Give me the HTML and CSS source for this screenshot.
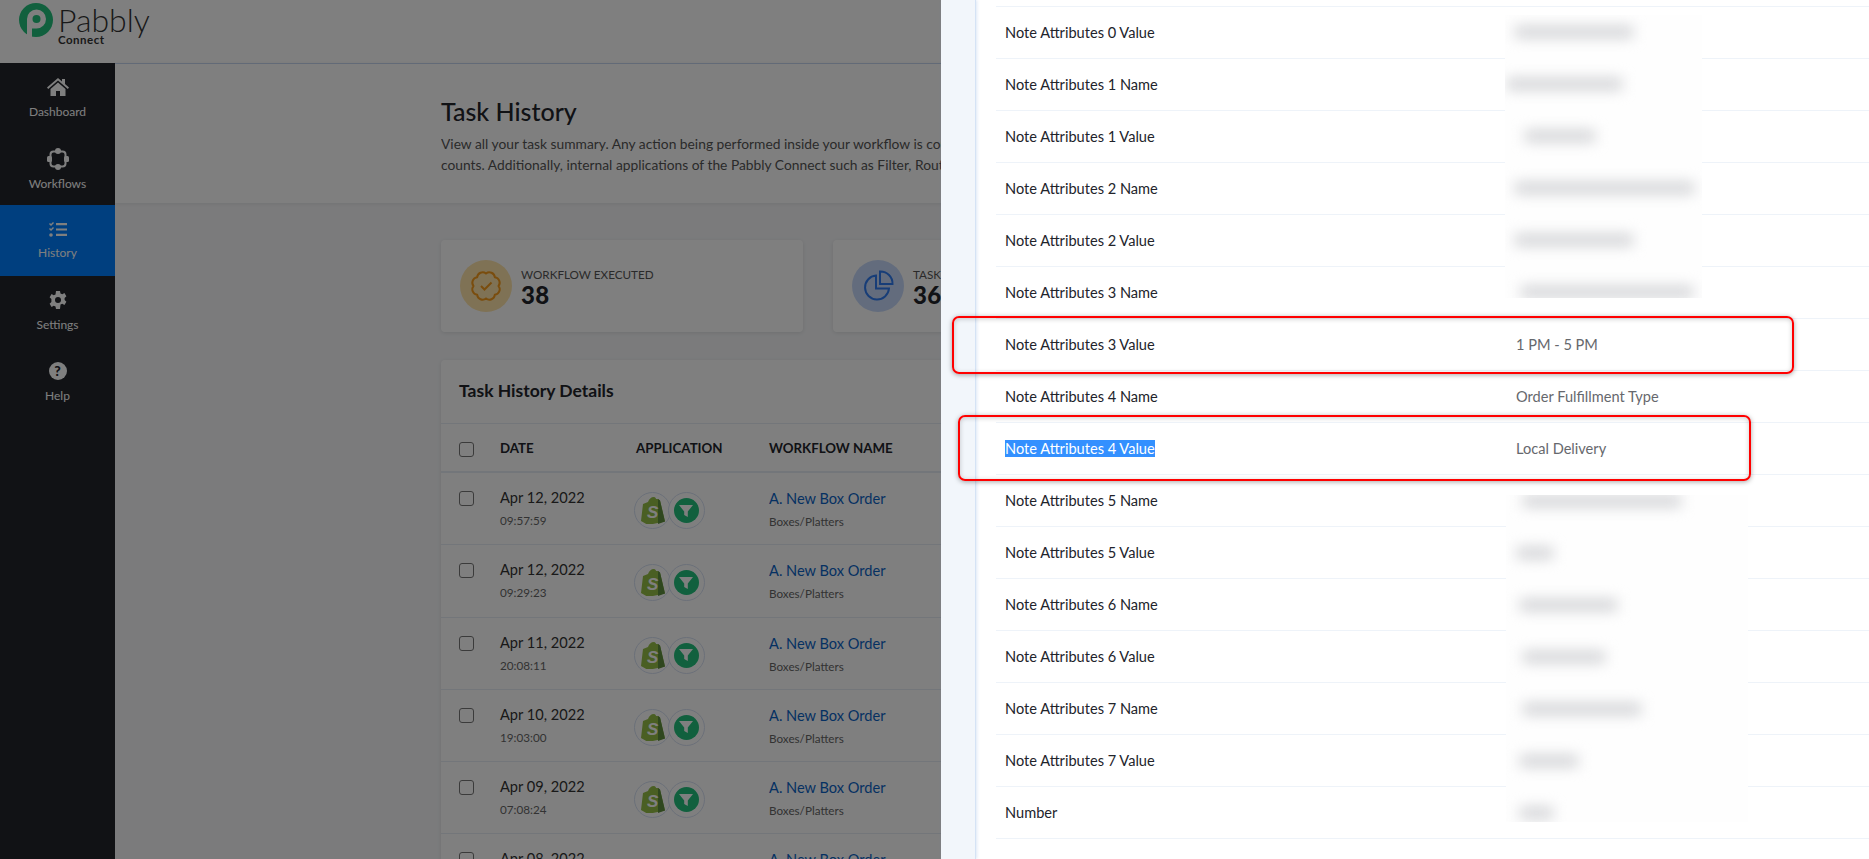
FILE: index.html
```html
<!DOCTYPE html>
<html lang="en">
<head>
    <meta charset="UTF-8">
    <title>Task History - Pabbly Connect</title>
    <link rel="stylesheet" href="styles.css">
</head>
<body>

    <header class="topbar">
        <svg class="logo-mark" width="36" height="36" viewBox="0 0 36 36">
            <circle cx="18" cy="18" r="17" fill="#23c17c"/>
            <path d="M9 36V17a9.5 9.5 0 1 1 9.5 9.500H14V36z" fill="#fff"/>
            <circle cx="18.500" cy="17" r="4" fill="#23c17c"/>
        </svg>
        <div class="logo-text">
            <span class="logo-name">Pabbly</span>
            <span class="logo-sub">Connect</span>
        </div>
    </header>

    <div class="layout">
        <nav class="sidebar">
            <a class="nav-item">
                <svg width="22" height="18" viewBox="0 0 22 18"><path d="M11 0l4 3.400V1h3v5l4 3.600-1.200 1.300L11 2.600 1.200 10.900 0 9.600zM3.500 11L11 4.600 18.500 11v7H13v-5H9v5H3.500z" fill="#fff"/></svg>
                <span>Dashboard</span>
            </a>
            <a class="nav-item tight">
                <svg width="22" height="22" viewBox="0 0 22 22"><rect x="3.500" y="3.500" width="15" height="15" rx="3" fill="none" stroke="#fff" stroke-width="2"/><circle cx="11" cy="3" r="3" fill="#fff"/><circle cx="11" cy="19" r="3" fill="#fff"/><rect x="0" y="8" width="5" height="6" rx="1.500" fill="#fff"/><rect x="17" y="8" width="5" height="6" rx="1.500" fill="#fff"/></svg>
                <span>Workflows</span>
            </a>
            <a class="nav-item active">
                <svg width="18" height="15" viewBox="0 0 18 15"><path d="M0 2l1 -1 1 1 2 -2 1 1 -3 3zM0 7l1 -1 1 1 2 -2 1 1 -3 3z" fill="#fff"/><circle cx="2" cy="13" r="1.800" fill="#fff"/><path d="M7 1h11v2.200H7zM7 6.400h11v2.200H7zM7 11.800h11v2.200H7z" fill="#fff"/></svg>
                <span>History</span>
            </a>
            <a class="nav-item">
                <svg width="18" height="18" viewBox="0 0 18 18"><path d="M7 0h4l.5 2.400 1.800.8 2.100-1.300 2 3.400-1.800 1.600v2.200l1.800 1.600-2 3.400-2.100-1.300-1.800.8L11 18H7l-.5-2.400-1.800-.8-2.100 1.300-2-3.400 1.800-1.600V7.900L.6 6.300l2-3.400 2.100 1.300 1.800-.8z" fill="#fff"/><circle cx="9" cy="9" r="3" fill="#22242b"/></svg>
                <span>Settings</span>
            </a>
            <a class="nav-item">
                <span class="help-icon">?</span>
                <span>Help</span>
            </a>
        </nav>

        <main class="content">
            <section class="page-head">
                <h1>Task History</h1>
                <p>View all your task summary. Any action being performed inside your workflow is counted as a task.<br>counts. Additionally, internal applications of the Pabbly Connect such as Filter, Router are not counted.</p>
            </section>

            <section class="page-body">
                <div class="stats">
                    <div class="stat-card">
                        <div class="stat-icon orange">
                            <svg width="32" height="32" viewBox="-16 -16 32 32"><path d="M12.500 0A5.500 5.500 0 0 1 8.840 8.840A5.500 5.500 0 0 1 0 12.500A5.500 5.500 0 0 1 -8.840 8.840A5.500 5.500 0 0 1 -12.500 0A5.500 5.500 0 0 1 -8.840 -8.840A5.500 5.500 0 0 1 0 -12.500A5.500 5.500 0 0 1 8.840 -8.840A5.500 5.500 0 0 1 12.500 0z" fill="none" stroke="#f59a1b" stroke-width="2"/><path d="M-5 0l3.500 3.500L5.500 -3.500" fill="none" stroke="#f59a1b" stroke-width="2"/></svg>
                        </div>
                        <div>
                            <div class="stat-label">WORKFLOW EXECUTED</div>
                            <div class="stat-value">38</div>
                        </div>
                    </div>
                    <div class="stat-card">
                        <div class="stat-icon blue">
                            <svg width="32" height="32" viewBox="0 0 32 32"><path d="M14 5.500A12 12 0 1 0 27 18.500H14z" fill="none" stroke="#2f7bf0" stroke-width="2"/><path d="M18 1.500A12 12 0 0 1 30.500 14H18z" fill="none" stroke="#2f7bf0" stroke-width="2"/></svg>
                        </div>
                        <div>
                            <div class="stat-label">TASKS CONSUMED</div>
                            <div class="stat-value">36</div>
                        </div>
                    </div>
                </div>

                <div class="table-card">
                    <h2>Task History Details</h2>
                    <div class="t-row t-head">
                        <span class="check"></span>
                        <span class="col-date">DATE</span>
                        <span class="col-app">APPLICATION</span>
                        <span class="col-name">WORKFLOW NAME</span>
                    </div>
                    <div class="t-row">
                        <span class="check"></span>
                        <div class="col-date"><div class="main-text">Apr 12, 2022</div><div class="sub-text">09:57:59</div></div>
                        <div class="col-app">
                            <span class="app-icon"><svg width="24" height="27" viewBox="0 0 24 27"><path d="M2 7l5-2C8 2 10 0 13 0c1 0 2 1 2 2l2 0 2 1.500 5 21-17 3.500L0 24z" fill="#95bf47"/><path d="M17 2l2 1.500 5 21-7 2.500z" fill="#5e8e3e"/><text x="6" y="21" class="bag-s">S</text></svg></span>
                            <span class="app-icon"><span class="filter-dot"><svg width="14" height="14" viewBox="0 0 14 14"><path d="M0 1h14L8.800 7.500V13L5.200 11V7.500z" fill="#fff"/></svg></span></span>
                        </div>
                        <div class="col-name"><a class="flow-link">A. New Box Order</a><div class="sub-text">Boxes/Platters</div></div>
                    </div>
                    <div class="t-row">
                        <span class="check"></span>
                        <div class="col-date"><div class="main-text">Apr 12, 2022</div><div class="sub-text">09:29:23</div></div>
                        <div class="col-app">
                            <span class="app-icon"><svg width="24" height="27" viewBox="0 0 24 27"><path d="M2 7l5-2C8 2 10 0 13 0c1 0 2 1 2 2l2 0 2 1.500 5 21-17 3.500L0 24z" fill="#95bf47"/><path d="M17 2l2 1.500 5 21-7 2.500z" fill="#5e8e3e"/><text x="6" y="21" class="bag-s">S</text></svg></span>
                            <span class="app-icon"><span class="filter-dot"><svg width="14" height="14" viewBox="0 0 14 14"><path d="M0 1h14L8.800 7.500V13L5.200 11V7.500z" fill="#fff"/></svg></span></span>
                        </div>
                        <div class="col-name"><a class="flow-link">A. New Box Order</a><div class="sub-text">Boxes/Platters</div></div>
                    </div>
                    <div class="t-row">
                        <span class="check"></span>
                        <div class="col-date"><div class="main-text">Apr 11, 2022</div><div class="sub-text">20:08:11</div></div>
                        <div class="col-app">
                            <span class="app-icon"><svg width="24" height="27" viewBox="0 0 24 27"><path d="M2 7l5-2C8 2 10 0 13 0c1 0 2 1 2 2l2 0 2 1.500 5 21-17 3.500L0 24z" fill="#95bf47"/><path d="M17 2l2 1.500 5 21-7 2.500z" fill="#5e8e3e"/><text x="6" y="21" class="bag-s">S</text></svg></span>
                            <span class="app-icon"><span class="filter-dot"><svg width="14" height="14" viewBox="0 0 14 14"><path d="M0 1h14L8.800 7.500V13L5.200 11V7.500z" fill="#fff"/></svg></span></span>
                        </div>
                        <div class="col-name"><a class="flow-link">A. New Box Order</a><div class="sub-text">Boxes/Platters</div></div>
                    </div>
                    <div class="t-row">
                        <span class="check"></span>
                        <div class="col-date"><div class="main-text">Apr 10, 2022</div><div class="sub-text">19:03:00</div></div>
                        <div class="col-app">
                            <span class="app-icon"><svg width="24" height="27" viewBox="0 0 24 27"><path d="M2 7l5-2C8 2 10 0 13 0c1 0 2 1 2 2l2 0 2 1.500 5 21-17 3.500L0 24z" fill="#95bf47"/><path d="M17 2l2 1.500 5 21-7 2.500z" fill="#5e8e3e"/><text x="6" y="21" class="bag-s">S</text></svg></span>
                            <span class="app-icon"><span class="filter-dot"><svg width="14" height="14" viewBox="0 0 14 14"><path d="M0 1h14L8.800 7.500V13L5.200 11V7.500z" fill="#fff"/></svg></span></span>
                        </div>
                        <div class="col-name"><a class="flow-link">A. New Box Order</a><div class="sub-text">Boxes/Platters</div></div>
                    </div>
                    <div class="t-row">
                        <span class="check"></span>
                        <div class="col-date"><div class="main-text">Apr 09, 2022</div><div class="sub-text">07:08:24</div></div>
                        <div class="col-app">
                            <span class="app-icon"><svg width="24" height="27" viewBox="0 0 24 27"><path d="M2 7l5-2C8 2 10 0 13 0c1 0 2 1 2 2l2 0 2 1.500 5 21-17 3.500L0 24z" fill="#95bf47"/><path d="M17 2l2 1.500 5 21-7 2.500z" fill="#5e8e3e"/><text x="6" y="21" class="bag-s">S</text></svg></span>
                            <span class="app-icon"><span class="filter-dot"><svg width="14" height="14" viewBox="0 0 14 14"><path d="M0 1h14L8.800 7.500V13L5.200 11V7.500z" fill="#fff"/></svg></span></span>
                        </div>
                        <div class="col-name"><a class="flow-link">A. New Box Order</a><div class="sub-text">Boxes/Platters</div></div>
                    </div>
                    <div class="t-row">
                        <span class="check"></span>
                        <div class="col-date"><div class="main-text">Apr 08, 2022</div></div>
                        <div class="col-app"></div>
                        <div class="col-name"><a class="flow-link">A. New Box Order</a></div>
                    </div>
                </div>
            </section>
        </main>
    </div>

    <div class="backdrop"></div>

    <aside class="drawer">
        <div class="drawer-strip"></div>
        <div class="drawer-body">
            <div class="d-top"></div>
            <div class="d-row"><span class="d-key">Note Attributes 0 Value</span></div>
            <div class="d-row"><span class="d-key">Note Attributes 1 Name</span></div>
            <div class="d-row"><span class="d-key">Note Attributes 1 Value</span></div>
            <div class="d-row"><span class="d-key">Note Attributes 2 Name</span></div>
            <div class="d-row"><span class="d-key">Note Attributes 2 Value</span></div>
            <div class="d-row"><span class="d-key">Note Attributes 3 Name</span></div>
            <div class="d-row"><span class="d-key">Note Attributes 3 Value</span><span class="d-val">1 PM - 5 PM</span></div>
            <div class="d-row"><span class="d-key">Note Attributes 4 Name</span><span class="d-val">Order Fulfillment Type</span></div>
            <div class="d-row"><span class="d-key"><span class="picked">Note Attributes 4 Value</span></span><span class="d-val">Local Delivery</span></div>
            <div class="d-row"><span class="d-key">Note Attributes 5 Name</span></div>
            <div class="d-row"><span class="d-key">Note Attributes 5 Value</span></div>
            <div class="d-row"><span class="d-key">Note Attributes 6 Name</span></div>
            <div class="d-row"><span class="d-key">Note Attributes 6 Value</span></div>
            <div class="d-row"><span class="d-key">Note Attributes 7 Name</span></div>
            <div class="d-row"><span class="d-key">Note Attributes 7 Value</span></div>
            <div class="d-row"><span class="d-key">Number</span></div>
        </div>
    </aside>

    <!-- blurred-out values and the red marks drawn on top of the screenshot -->
    <div class="smudge smudge-top">
        <div class="smear"><i style="width:118px;margin-left:10px"></i></div>
        <div class="smear"><i style="width:115px;margin-left:2px"></i></div>
        <div class="smear"><i style="width:70px;margin-left:20px"></i></div>
        <div class="smear"><i style="width:179px;margin-left:10px"></i></div>
        <div class="smear"><i style="width:118px;margin-left:10px"></i></div>
        <div class="smear"><i style="width:172px;margin-left:16px"></i></div>
    </div>
    <div class="smudge smudge-low">
        <div class="smear"><i style="width:158px;margin-left:17px"></i></div>
        <div class="smear"><i style="width:36px;margin-left:11px"></i></div>
        <div class="smear"><i style="width:97px;margin-left:14px"></i></div>
        <div class="smear"><i style="width:82px;margin-left:17px"></i></div>
        <div class="smear"><i style="width:118px;margin-left:17px"></i></div>
        <div class="smear"><i style="width:58px;margin-left:14px"></i></div>
        <div class="smear"><i style="width:33px;margin-left:14px"></i></div>
    </div>

    <div class="mark mark-one"></div>
    <div class="mark mark-two"></div>

</body>
</html>
```

FILE: styles.css
```css
html, body {
    margin: 0;
    padding: 0;
    height: 859px;
    overflow: hidden;
}

body {
    position: relative;
    font-family: 'Lato', 'Open Sans', sans-serif;
    color: #22242b;
    background-color: #f6f7f9;
}

/* --- Top bar --- */
.topbar {
    height: 63px;
    box-sizing: border-box;
    padding: 2px 0 0 18px;
    display: flex;
    gap: 4px;
    background-color: #fff;
}

.logo-text {
    display: flex;
    flex-direction: column;
    padding-top: 3px;
}

.logo-name {
    font-size: 32px;
    font-weight: 300;
    line-height: 30px;
    color: #333;
}

.logo-sub {
    font-size: 11.500px;
    font-weight: 700;
    line-height: 9px;
    letter-spacing: 0.5px;
    color: #333;
}

/* --- Sidebar --- */
.layout {
    display: flex;
    height: 796px;
}

.sidebar {
    width: 115px;
    flex-shrink: 0;
    background-color: #22242b;
}

.nav-item {
    height: 71px;
    display: flex;
    flex-direction: column;
    align-items: center;
    justify-content: center;
    gap: 8px;
    color: #fff;
    font-size: 12px;
}

.nav-item.tight {
    gap: 6px;
}

.nav-item.active {
    background-color: #007eff;
}

.help-icon {
    width: 18px;
    height: 18px;
    border-radius: 50%;
    background-color: #fff;
    color: #22242b;
    font-size: 14px;
    font-weight: 900;
    line-height: 18px;
    text-align: center;
}

/* --- Main content --- */
.content {
    flex: 1;
    min-width: 0;
}

.page-head {
    height: 140px;
    box-sizing: border-box;
    padding: 31px 0 0 326px;
    background-color: #fff;
    border-top: 1px solid #c4d4ee;
    box-shadow: 0 1px 4px rgba(0, 0, 0, 0.08);
}

.page-head h1 {
    margin: 0 0 6px;
    font-size: 25px;
    font-weight: 500;
    line-height: 32px;
}

.page-head p {
    width: 500px;
    margin: 0;
    overflow: hidden;
    font-size: 13.800px;
    line-height: 21px;
    color: #555;
    white-space: nowrap;
}

.page-body {
    padding: 37px 0 0 326px;
}

.stats {
    display: flex;
    gap: 30px;
}

.stat-card {
    width: 362px;
    height: 92px;
    box-sizing: border-box;
    padding: 20px 19px;
    display: flex;
    align-items: center;
    gap: 9px;
    background-color: #fff;
    border-radius: 4px;
    box-shadow: 0 1px 4px rgba(0, 0, 0, 0.1);
}

.stat-icon {
    width: 52px;
    height: 52px;
    border-radius: 50%;
    display: flex;
    align-items: center;
    justify-content: center;
}

.stat-icon.orange {
    background-color: #ffe4ab;
}

.stat-icon.blue {
    background-color: #c7d9fa;
}

.stat-label {
    font-size: 11.700px;
    line-height: 16px;
    color: #555;
}

.stat-value {
    font-size: 24px;
    font-weight: 900;
    line-height: 25px;
    letter-spacing: 0.3px;
}

/* --- History table --- */
.table-card {
    width: 1000px;
    margin-top: 28px;
    background-color: #fff;
    border-radius: 4px;
    box-shadow: 0 1px 4px rgba(0, 0, 0, 0.1);
}

.table-card h2 {
    margin: 0;
    height: 64px;
    padding-left: 18px;
    font-size: 17.500px;
    font-weight: 700;
    line-height: 62px;
    border-bottom: 1px solid #e6ecf5;
    box-sizing: border-box;
}

.t-row {
    height: 72.300px;
    box-sizing: border-box;
    padding-left: 18px;
    display: flex;
    border-bottom: 1px solid #e6ecf5;
}

.t-head {
    height: 49px;
    align-items: center;
    font-size: 13.300px;
    font-weight: 700;
    border-bottom-width: 2px;
}

.check {
    width: 15px;
    height: 15px;
    box-sizing: border-box;
    margin-top: 18px;
    border: 1px solid #777;
    border-radius: 3px;
    background-color: #fff;
}

.t-head .check {
    margin-top: 4px;
}

.col-date {
    width: 136px;
    margin-left: 26px;
}

.col-app {
    width: 135px;
    display: flex;
    align-items: flex-start;
    margin-left: -2px;
}

.t-head .col-app {
    width: 133px;
    margin-left: 0;
}

.col-name {
    flex: 1;
}

.t-row > div {
    padding-top: 15px;
}

.main-text, .flow-link {
    font-size: 14.600px;
    line-height: 20px;
}

.main-text {
    color: #333;
}

.flow-link {
    color: #0b63c5;
}

.sub-text {
    margin-top: 5px;
    font-size: 11.700px;
    line-height: 14px;
    color: #666;
}

.app-icon {
    width: 37px;
    height: 37px;
    box-sizing: border-box;
    margin: 4px -3.500px 0 0;
    display: flex;
    align-items: center;
    justify-content: center;
    border: 1px solid #d6e0f2;
    border-radius: 50%;
    background-color: #fff;
}

.filter-dot {
    width: 25px;
    height: 25px;
    border-radius: 50%;
    display: flex;
    align-items: center;
    justify-content: center;
    background-color: #23c17c;
}

.bag-s {
    font-family: 'Liberation Sans', sans-serif;
    font-size: 17px;
    font-weight: 700;
    font-style: italic;
    fill: #fff;
}

/* --- Dimmed backdrop --- */
.backdrop {
    position: absolute;
    top: 0;
    left: 0;
    width: 100%;
    height: 100%;
    background-color: rgba(0, 0, 0, 0.5);
}

/* --- Drawer --- */
.drawer {
    position: absolute;
    top: 0;
    right: 0;
    bottom: 0;
    width: 928px;
    display: flex;
    background-color: #fff;
}

.drawer-strip {
    width: 35px;
    box-sizing: border-box;
    flex-shrink: 0;
    background-color: #f2f6fb;
    border-right: 1px solid #d5e3f5;
    box-shadow: 1px 0 3px rgba(120, 160, 220, 0.25);
}

.drawer-body {
    flex: 1;
    padding-left: 20px;
}

.d-top {
    height: 7px;
    border-bottom: 1px solid #eef3f9;
    box-sizing: border-box;
}

.d-row {
    height: 52px;
    box-sizing: border-box;
    padding-left: 9px;
    display: flex;
    align-items: center;
    font-size: 14.600px;
    line-height: 21px;
    border-bottom: 1px solid #eef3f9;
    color: #22242b;
}

.d-key {
    width: 511px;
    flex-shrink: 0;
}

.d-val {
    color: #66686d;
}

.picked {
    background-color: #3390ff;
    color: #fff;
}

/* --- Blurred values --- */
.smudge {
    position: absolute;
    background-color: #fefefe;
    overflow: hidden;
}

.smudge-top {
    top: 15px;
    left: 1505px;
    width: 197px;
    height: 283px;
}

.smudge-top .smear:first-child {
    margin-top: -9px;
}

.smudge-low {
    top: 495px;
    left: 1506px;
    width: 242px;
    height: 327px;
}

.smudge-low .smear:first-child {
    margin-top: -20px;
}

.smear {
    height: 52px;
    display: flex;
    align-items: center;
}

.smear i {
    display: block;
    height: 12px;
    background-color: #d2d3d6;
    filter: blur(7px);
}

/* --- Red marks --- */
.mark {
    position: absolute;
    box-sizing: border-box;
    border: 2px solid #f00;
    border-radius: 7px;
    box-shadow: 0 1px 5px rgba(0, 0, 0, 0.35), inset 0 1px 5px rgba(0, 0, 0, 0.2);
}

.mark-one {
    top: 316px;
    left: 952px;
    width: 842px;
    height: 58px;
}

.mark-two {
    top: 415px;
    left: 958px;
    width: 793px;
    height: 66px;
}
```
